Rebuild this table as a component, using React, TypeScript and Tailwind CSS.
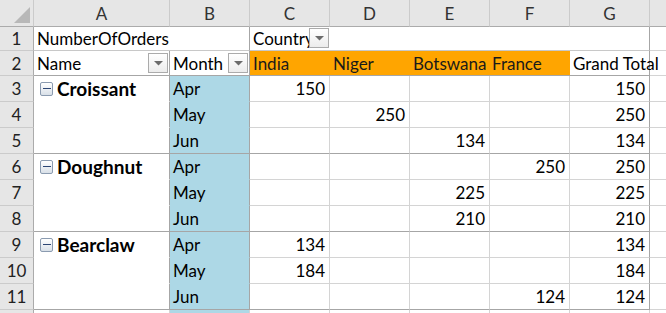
import type { ReactNode } from 'react'

type Group = {
  name: string
  rows: { month: string; vals: (number | null)[]; total: number }[]
}

const GROUPS: Group[] = [
  {
    name: 'Croissant',
    rows: [
      { month: 'Apr', vals: [150, null, null, null], total: 150 },
      { month: 'May', vals: [null, 250, null, null], total: 250 },
      { month: 'Jun', vals: [null, null, 134, null], total: 134 },
    ],
  },
  {
    name: 'Doughnut',
    rows: [
      { month: 'Apr', vals: [null, null, null, 250], total: 250 },
      { month: 'May', vals: [null, null, 225, null], total: 225 },
      { month: 'Jun', vals: [null, null, 210, null], total: 210 },
    ],
  },
  {
    name: 'Bearclaw',
    rows: [
      { month: 'Apr', vals: [134, null, null, null], total: 134 },
      { month: 'May', vals: [184, null, null, null], total: 184 },
      { month: 'Jun', vals: [null, null, null, 124], total: 124 },
    ],
  },
]

const COLS = ['A', 'B', 'C', 'D', 'E', 'F', 'G']
const COL_W = ['w-[136px]', 'w-[80px]', 'w-[80px]', 'w-[80px]', 'w-[80px]', 'w-[80px]', 'w-[80px]']

function DropButton() {
  return (
    <div className="w-[20px] h-[20px] shrink-0 border border-[#ababab] bg-gradient-to-b from-white to-[#ececec] flex items-center justify-center">
      <svg width="9" height="5" viewBox="0 0 9 5">
        <polygon points="0,0 9,0 4.5,4.5" fill="#6b6b6b" />
      </svg>
    </div>
  )
}

function Collapse() {
  return (
    <div className="w-[13px] h-[14px] shrink-0 border border-[#8b9bb0] rounded-[2px] bg-gradient-to-b from-white to-[#d9e0e8] flex items-center justify-center mr-[4px]">
      <div className="w-[8px] h-[1.5px] bg-[#2c4674]" />
    </div>
  )
}

function RowHead({ n }: { n: number }) {
  return (
    <div className="w-[34px] shrink-0 h-full bg-[#e6e6e6] border-r border-b border-r-[#ababab] border-b-[#cbcbcb] flex items-center justify-center text-[#222]">
      {n}
    </div>
  )
}

function Row({ children, h }: { children: ReactNode; h: string }) {
  return <div className={`flex ${h}`}>{children}</div>
}

export default function App() {
  return (
    <div className="w-[666px] h-[313px] overflow-hidden bg-white text-[17px] leading-none text-black font-['Lato','Liberation_Sans',sans-serif]">
      {/* column letters */}
      <Row h="h-[27px]">
        <div className="w-[34px] shrink-0 h-full bg-[#e6e6e6] border-r border-b border-r-[#cbcbcb] border-b-[#ababab] flex items-end justify-end p-[3px]">
          <svg width="16" height="16" viewBox="0 0 16 16">
            <polygon points="16,0 16,16 0,16" fill="#b8b8b8" />
          </svg>
        </div>
        {COLS.map((c, i) => (
          <div key={c} className={`${COL_W[i]} shrink-0 h-full bg-[#e6e6e6] border-r border-b border-r-[#cbcbcb] border-b-[#ababab] flex items-center justify-center text-[#333]`}>
            {c}
          </div>
        ))}
        <div className="flex-1 h-full bg-[#e6e6e6] border-b border-b-[#ababab]" />
      </Row>

      {/* row 1 */}
      <Row h="h-[24px]">
        <RowHead n={1} />
        <div className="w-[216px] shrink-0 h-full border-r border-b border-r-[#a6a6a6] border-b-[#c8c8c8] flex items-center pl-[3px]">
          NumberOfOrders
        </div>
        <div className="w-[400px] shrink-0 h-full border-r border-b border-r-[#a6a6a6] border-b-[#c8c8c8] flex items-center">
          <div className="w-[80px] h-full relative flex items-center pl-[3px] overflow-hidden">
            <span className="whitespace-nowrap">Country</span>
            <div className="absolute right-[1px] top-[1px]">
              <DropButton />
            </div>
          </div>
        </div>
        <div className="flex-1 h-full border-b border-b-[#d4d4d4]" />
      </Row>

      {/* row 2 */}
      <Row h="h-[25px]">
        <RowHead n={2} />
        <div className="w-[136px] shrink-0 h-full border-r border-b border-r-[#a6a6a6] border-b-[#a6a6a6] flex items-center justify-between pl-[3px] pr-[1px]">
          <span>Name</span>
          <DropButton />
        </div>
        <div className="w-[80px] shrink-0 h-full border-r border-b border-r-[#a6a6a6] border-b-[#a6a6a6] flex items-center justify-between pl-[3px] pr-[1px]">
          <span>Month</span>
          <DropButton />
        </div>
        <div className="w-[320px] shrink-0 h-full bg-[#ffa500] border-b border-b-[#a6a6a6] flex items-center text-[#1a1a1a]">
          <span className="w-[80px] pl-[3px]">India</span>
          <span className="w-[80px] pl-[3px]">Niger</span>
          <span className="w-[80px] pl-[3px] whitespace-nowrap">Botswana</span>
          <span className="w-[80px] pl-[2px]">France</span>
        </div>
        <div className="w-[80px] shrink-0 h-full border-r border-b border-r-[#a6a6a6] border-b-[#a6a6a6] flex items-center pl-[3px] whitespace-nowrap relative z-10">
          Grand Total
        </div>
        <div className="flex-1 h-full border-b border-b-[#d4d4d4]" />
      </Row>

      {/* body */}
      {GROUPS.map((g, gi) =>
        g.rows.map((r, ri) => {
          const last = ri === g.rows.length - 1
          const n = 3 + gi * 3 + ri
          return (
            <Row key={n} h="h-[26px]">
              <RowHead n={n} />
              <div className={`w-[136px] shrink-0 h-full border-r border-b border-r-[#a6a6a6] ${last ? 'border-b-[#a6a6a6]' : 'border-b-white'} flex items-center pl-[6px] font-bold text-[19px]`}>
                {ri === 0 && (
                  <>
                    <Collapse />
                    {g.name}
                  </>
                )}
              </div>
              <div className={`w-[80px] shrink-0 h-full bg-[#add8e6] border-r border-b border-r-[#a6a6a6] ${last ? 'border-b-[#a6a6a6]' : 'border-b-[#add8e6]'} flex items-center pl-[3px]`}>
                {r.month}
              </div>
              {r.vals.map((v, vi) => (
                <div key={vi} className={`w-[80px] shrink-0 h-full border-r border-b border-r-[#d4d4d4] ${last ? 'border-b-[#a6a6a6]' : 'border-b-[#d4d4d4]'} flex items-center justify-end pr-[4px]`}>
                  {v ?? ''}
                </div>
              ))}
              <div className={`w-[80px] shrink-0 h-full border-r border-b border-r-[#a6a6a6] ${last ? 'border-b-[#a6a6a6]' : 'border-b-[#d4d4d4]'} flex items-center justify-end pr-[4px]`}>
                {r.total}
              </div>
              <div className="flex-1 h-full border-b border-b-[#d4d4d4]" />
            </Row>
          )
        })
      )}

      {/* row 12, cut off by the window */}
      <Row h="h-[26px]">
        <div className="w-[34px] shrink-0 h-full bg-[#e6e6e6] border-r border-r-[#ababab]" />
        <div className="w-[136px] shrink-0 h-full border-r border-r-[#d4d4d4]" />
        <div className="w-[80px] shrink-0 h-full bg-[#add8e6] border-r border-r-[#d4d4d4]" />
        <div className="w-[80px] shrink-0 h-full border-r border-r-[#d4d4d4]" />
        <div className="w-[80px] shrink-0 h-full border-r border-r-[#d4d4d4]" />
        <div className="w-[80px] shrink-0 h-full border-r border-r-[#d4d4d4]" />
        <div className="w-[80px] shrink-0 h-full border-r border-r-[#d4d4d4]" />
        <div className="w-[80px] shrink-0 h-full border-r border-r-[#d4d4d4]" />
      </Row>
    </div>
  )
}
